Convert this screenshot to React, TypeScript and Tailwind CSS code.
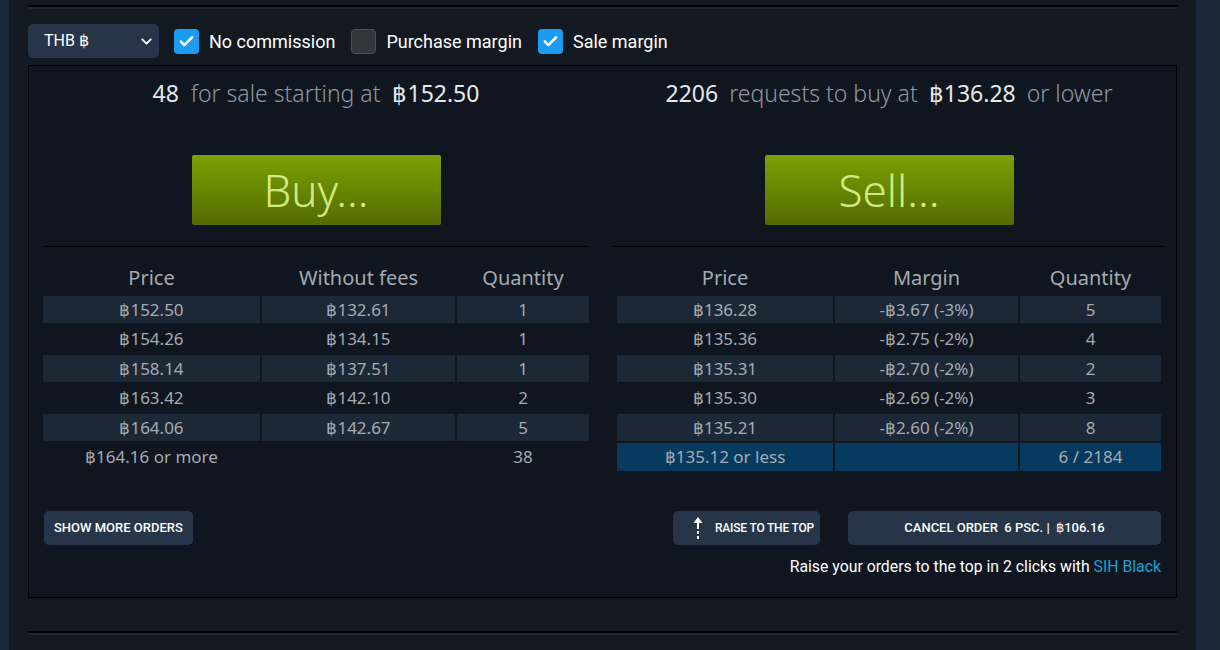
import { ChevronDown, Check } from "lucide-react"

const sellOrders = [
  { price: "฿152.50", net: "฿132.61", qty: "1" },
  { price: "฿154.26", net: "฿134.15", qty: "1" },
  { price: "฿158.14", net: "฿137.51", qty: "1" },
  { price: "฿163.42", net: "฿142.10", qty: "2" },
  { price: "฿164.06", net: "฿142.67", qty: "5" },
]

const buyOrders = [
  { price: "฿136.28", margin: "-฿3.67 (-3%)", qty: "5" },
  { price: "฿135.36", margin: "-฿2.75 (-2%)", qty: "4" },
  { price: "฿135.31", margin: "-฿2.70 (-2%)", qty: "2" },
  { price: "฿135.30", margin: "-฿2.69 (-2%)", qty: "3" },
  { price: "฿135.21", margin: "-฿2.60 (-2%)", qty: "8" },
]

function Checkbox({ checked, label }: { checked: boolean; label: string }) {
  return (
    <label className="flex items-center gap-[10px]">
      {checked ? (
        <span className="flex h-[25px] w-[25px] items-center justify-center rounded-[4px] bg-[#1a9cf2]">
          <Check className="h-[17px] w-[17px] text-white" strokeWidth={3.5} />
        </span>
      ) : (
        <span className="h-[25px] w-[25px] rounded-[4px] border border-[#4b5058] bg-[#31363d]" />
      )}
      <span className="text-[18px] text-white">{label}</span>
    </label>
  )
}

function RaiseIcon() {
  return (
    <svg width="10" height="22" viewBox="0 0 10 22" className="shrink-0 text-white">
      <polygon points="5,0 9.5,6 0.5,6" fill="currentColor" />
      <rect x="4" y="5" width="2" height="7" fill="currentColor" />
      <rect x="4" y="14" width="2" height="3" fill="currentColor" />
      <rect x="4" y="19" width="2" height="3" fill="currentColor" />
    </svg>
  )
}

export default function App() {
  return (
    <div className="flex min-h-screen bg-[#1b2838] font-['Roboto',sans-serif]">
      <div className="ml-[9px] h-[650px] w-[1187px] overflow-hidden bg-[#121921] px-[19px] pt-[5px]">
        {/* top rule */}
        <div className="h-[4px] border-t-2 border-black bg-[#1d2633]" />

        {/* Controls */}
        <div className="mt-[15px] flex h-[34px] items-center gap-[16px]">
          <div className="mr-[-1px] flex h-[34px] w-[131px] items-center justify-between rounded-[5px] bg-[#263548] pl-[16px] pr-[4px] text-[16px] text-white">
            <span>THB ฿</span>
            <ChevronDown className="h-[17px] w-[17px]" strokeWidth={2.5} />
          </div>
          <Checkbox checked label="No commission" />
          <Checkbox checked={false} label="Purchase margin" />
          <Checkbox checked label="Sale margin" />
        </div>

        {/* Panel */}
        <div className="mt-[7px] h-[533px] border border-black bg-[#0f161f] pl-[14px] pr-[15px] pt-[11px] font-['Noto_Sans',sans-serif]">
          <div className="grid grid-cols-[546px_544px] gap-x-[28px]">
            {/* Sell side */}
            <div className="flex flex-col">
              <div className="h-[32px] text-center text-[23px] leading-[32px]">
                <span className="text-[#e6e9ec]">48</span>
                <span className="mx-[6px] font-light text-[#8f98a0]"> for sale starting at </span>
                <span className="text-[#e6e9ec]">฿152.50</span>
              </div>
              <div className="mt-[46px] flex justify-center">
                <div className="flex h-[70px] w-[249px] items-center justify-center rounded-[2px] bg-gradient-to-b from-[#7ca104] to-[#536c00] text-[44px] font-light text-[#d2ea84]">
                  Buy...
                </div>
              </div>
              <div className="mt-[21px] h-px bg-black" />
              <div className="mt-[15px] grid grid-cols-[217px_193px_132px] gap-x-[2px] gap-y-[2.5px] text-center text-[17px] text-[#a4abb2]">
                <div className="h-[31px] text-[20px] leading-[31px] text-[#a3aab1]">Price</div>
                <div className="h-[31px] text-[20px] leading-[31px] text-[#a3aab1]">Without fees</div>
                <div className="h-[31px] text-[20px] leading-[31px] text-[#a3aab1]">Quantity</div>
                {sellOrders.map((o, i) => {
                  const bg = i % 2 === 0 ? "bg-[#1d2837]" : ""
                  return [
                    <div key={`p${i}`} className={`h-[27px] leading-[27px] ${bg}`}>{o.price}</div>,
                    <div key={`n${i}`} className={`h-[27px] leading-[27px] ${bg}`}>{o.net}</div>,
                    <div key={`q${i}`} className={`h-[27px] leading-[27px] ${bg}`}>{o.qty}</div>,
                  ]
                })}
                <div className="h-[27px] leading-[27px]">฿164.16 or more</div>
                <div className="h-[27px]" />
                <div className="h-[27px] leading-[27px]">38</div>
              </div>
            </div>

            {/* Buy side */}
            <div className="flex flex-col">
              <div className="h-[32px] text-center text-[23px] leading-[32px]">
                <span className="text-[#e6e9ec]">2206</span>
                <span className="mx-[5px] font-light text-[#8f98a0]"> requests to buy at </span>
                <span className="text-[#e6e9ec]">฿136.28</span>
                <span className="ml-[5px] font-light text-[#8f98a0]"> or lower</span>
              </div>
              <div className="mt-[46px] flex justify-center">
                <div className="flex h-[70px] w-[249px] items-center justify-center rounded-[2px] bg-gradient-to-b from-[#7ca104] to-[#536c00] text-[44px] font-light text-[#d2ea84]">
                  Sell...
                </div>
              </div>
              <div className="-mx-[4px] mt-[21px] h-px bg-black" />
              <div className="mt-[15px] grid grid-cols-[216px_183px_141px] gap-x-[2px] gap-y-[2.5px] text-center text-[17px] text-[#a4abb2]">
                <div className="h-[31px] text-[20px] leading-[31px] text-[#a3aab1]">Price</div>
                <div className="h-[31px] text-[20px] leading-[31px] text-[#a3aab1]">Margin</div>
                <div className="h-[31px] text-[20px] leading-[31px] text-[#a3aab1]">Quantity</div>
                {buyOrders.map((o, i) => {
                  const bg = i % 2 === 0 ? "bg-[#1d2837]" : ""
                  return [
                    <div key={`p${i}`} className={`h-[27px] leading-[27px] ${bg}`}>{o.price}</div>,
                    <div key={`m${i}`} className={`h-[27px] leading-[27px] ${bg}`}>{o.margin}</div>,
                    <div key={`q${i}`} className={`h-[27px] leading-[27px] ${bg}`}>{o.qty}</div>,
                  ]
                })}
                <div className="h-[28px] bg-[#063a5e] leading-[28px]">฿135.12 or less</div>
                <div className="h-[28px] bg-[#063a5e]" />
                <div className="h-[28px] bg-[#063a5e] leading-[28px]">6 / 2184</div>
              </div>
            </div>
          </div>

          {/* Actions */}
          <div className="mt-[40px] flex items-start justify-between pl-px font-['Roboto',sans-serif]">
            <button className="h-[34px] rounded-[5px] bg-[#263548] px-[10px] text-[13px] font-medium text-white">
              SHOW MORE ORDERS
            </button>
            <div className="flex flex-col items-end">
              <div className="flex gap-[28px]">
                <button className="flex h-[34px] w-[147px] items-center gap-[12px] whitespace-nowrap rounded-[5px] bg-[#263548] pl-[20px] text-[12px] font-medium tracking-[-0.2px] text-white">
                  <RaiseIcon />
                  RAISE TO THE TOP
                </button>
                <button className="flex h-[34px] w-[313px] items-center justify-center whitespace-pre rounded-[5px] bg-[#263548] text-[13px] font-medium text-white">
                  {"CANCEL ORDER  6 PSC. |  ฿106.16"}
                </button>
              </div>
              <div className="mt-[10px] whitespace-nowrap text-[15.8px] text-white">
                Raise your orders to the top in 2 clicks with{" "}
                <span className="text-[#17a2cf]">SIH Black</span>
              </div>
            </div>
          </div>
        </div>

        {/* bottom rule */}
        <div className="mt-[33px] h-[4px] border-t-2 border-black bg-[#1d2633]" />
      </div>
    </div>
  )
}
